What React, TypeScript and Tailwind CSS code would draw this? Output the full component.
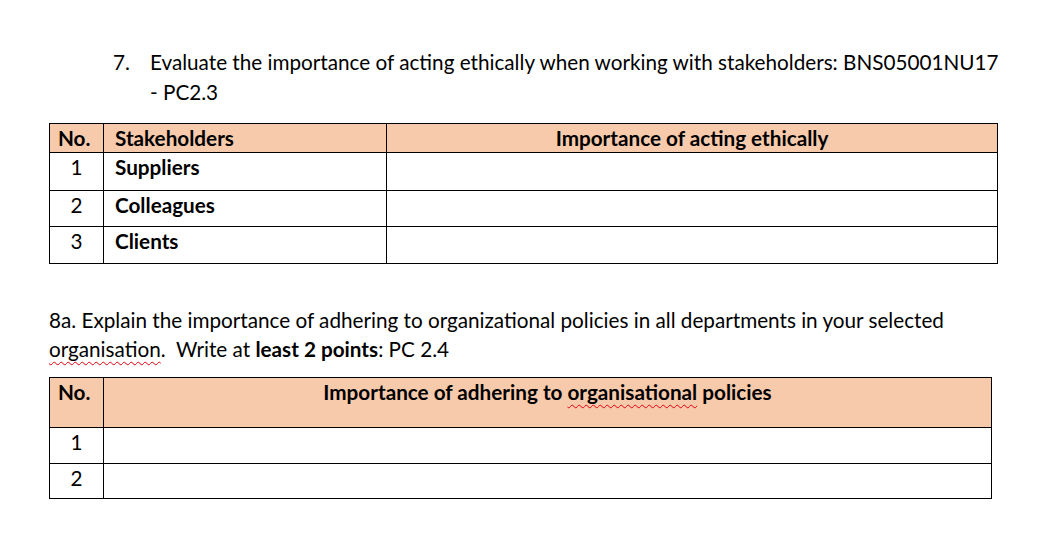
const font = { fontFamily: 'Lato, "Noto Sans", sans-serif' }

const stakeholders = ['Suppliers', 'Colleagues', 'Clients']
const rowHeights = ['h-[38px]', 'h-[36px]', 'h-[37px]']

export default function App(): React.JSX.Element {
  return (
    <div className="min-h-svh w-[1047px] bg-white text-[20.7px] text-black" style={font}>
      <div className="pt-[47px] pl-[113px] pr-4">
        <div className="flex leading-[30px]">
          <span className="w-[37px] shrink-0">7.</span>
          <p>
            Evaluate the importance of acting ethically when working with stakeholders: BNS05001NU17
            <br />- PC2.3
          </p>
        </div>
      </div>

      <table className="mt-[16px] ml-[49px] w-[949px] border-collapse">
        <thead>
          <tr className="h-[29px] bg-[#f7caac]">
            <th className="w-[54px] border border-black px-2 text-left font-bold leading-[27px]">No.</th>
            <th className="w-[283px] border border-black px-[11px] text-left font-bold leading-[27px]">Stakeholders</th>
            <th className="border border-black text-center font-bold leading-[27px]">Importance of acting ethically</th>
          </tr>
        </thead>
        <tbody>
          {stakeholders.map((name, i) => (
            <tr key={name} className={rowHeights[i]}>
              <td className="border border-black text-center align-top leading-[28px]">{i + 1}</td>
              <td className="border border-black px-[11px] align-top font-bold leading-[28px]">{name}</td>
              <td className="border border-black" />
            </tr>
          ))}
        </tbody>
      </table>

      <p className="mt-[42px] ml-[49px] w-[960px] leading-[29px]">
        8a. Explain the importance of adhering to organizational policies in all departments in your selected{' '}
        <span className="underline decoration-red-600 decoration-wavy decoration-1 underline-offset-4">organisation</span>.
        &nbsp;Write at <b>least 2 points</b>: PC 2.4
      </p>

      <table className="mt-[13px] ml-[49px] w-[943px] border-collapse">
        <thead>
          <tr className="h-[50px] bg-[#f7caac]">
            <th className="w-[54px] border border-black px-2 text-left align-top font-bold leading-[29px]">No.</th>
            <th className="border border-black text-center align-top font-bold leading-[29px]">
              Importance of adhering to{' '}
              <span className="underline decoration-red-600 decoration-wavy decoration-1 underline-offset-4">organisational</span>{' '}
              policies
            </th>
          </tr>
        </thead>
        <tbody>
          {[1, 2].map(n => (
            <tr key={n} className={n === 1 ? 'h-[36px]' : 'h-[35px]'}>
              <td className="border border-black text-center align-top leading-[28px]">{n}</td>
              <td className="border border-black" />
            </tr>
          ))}
        </tbody>
      </table>
    </div>
  )
}
